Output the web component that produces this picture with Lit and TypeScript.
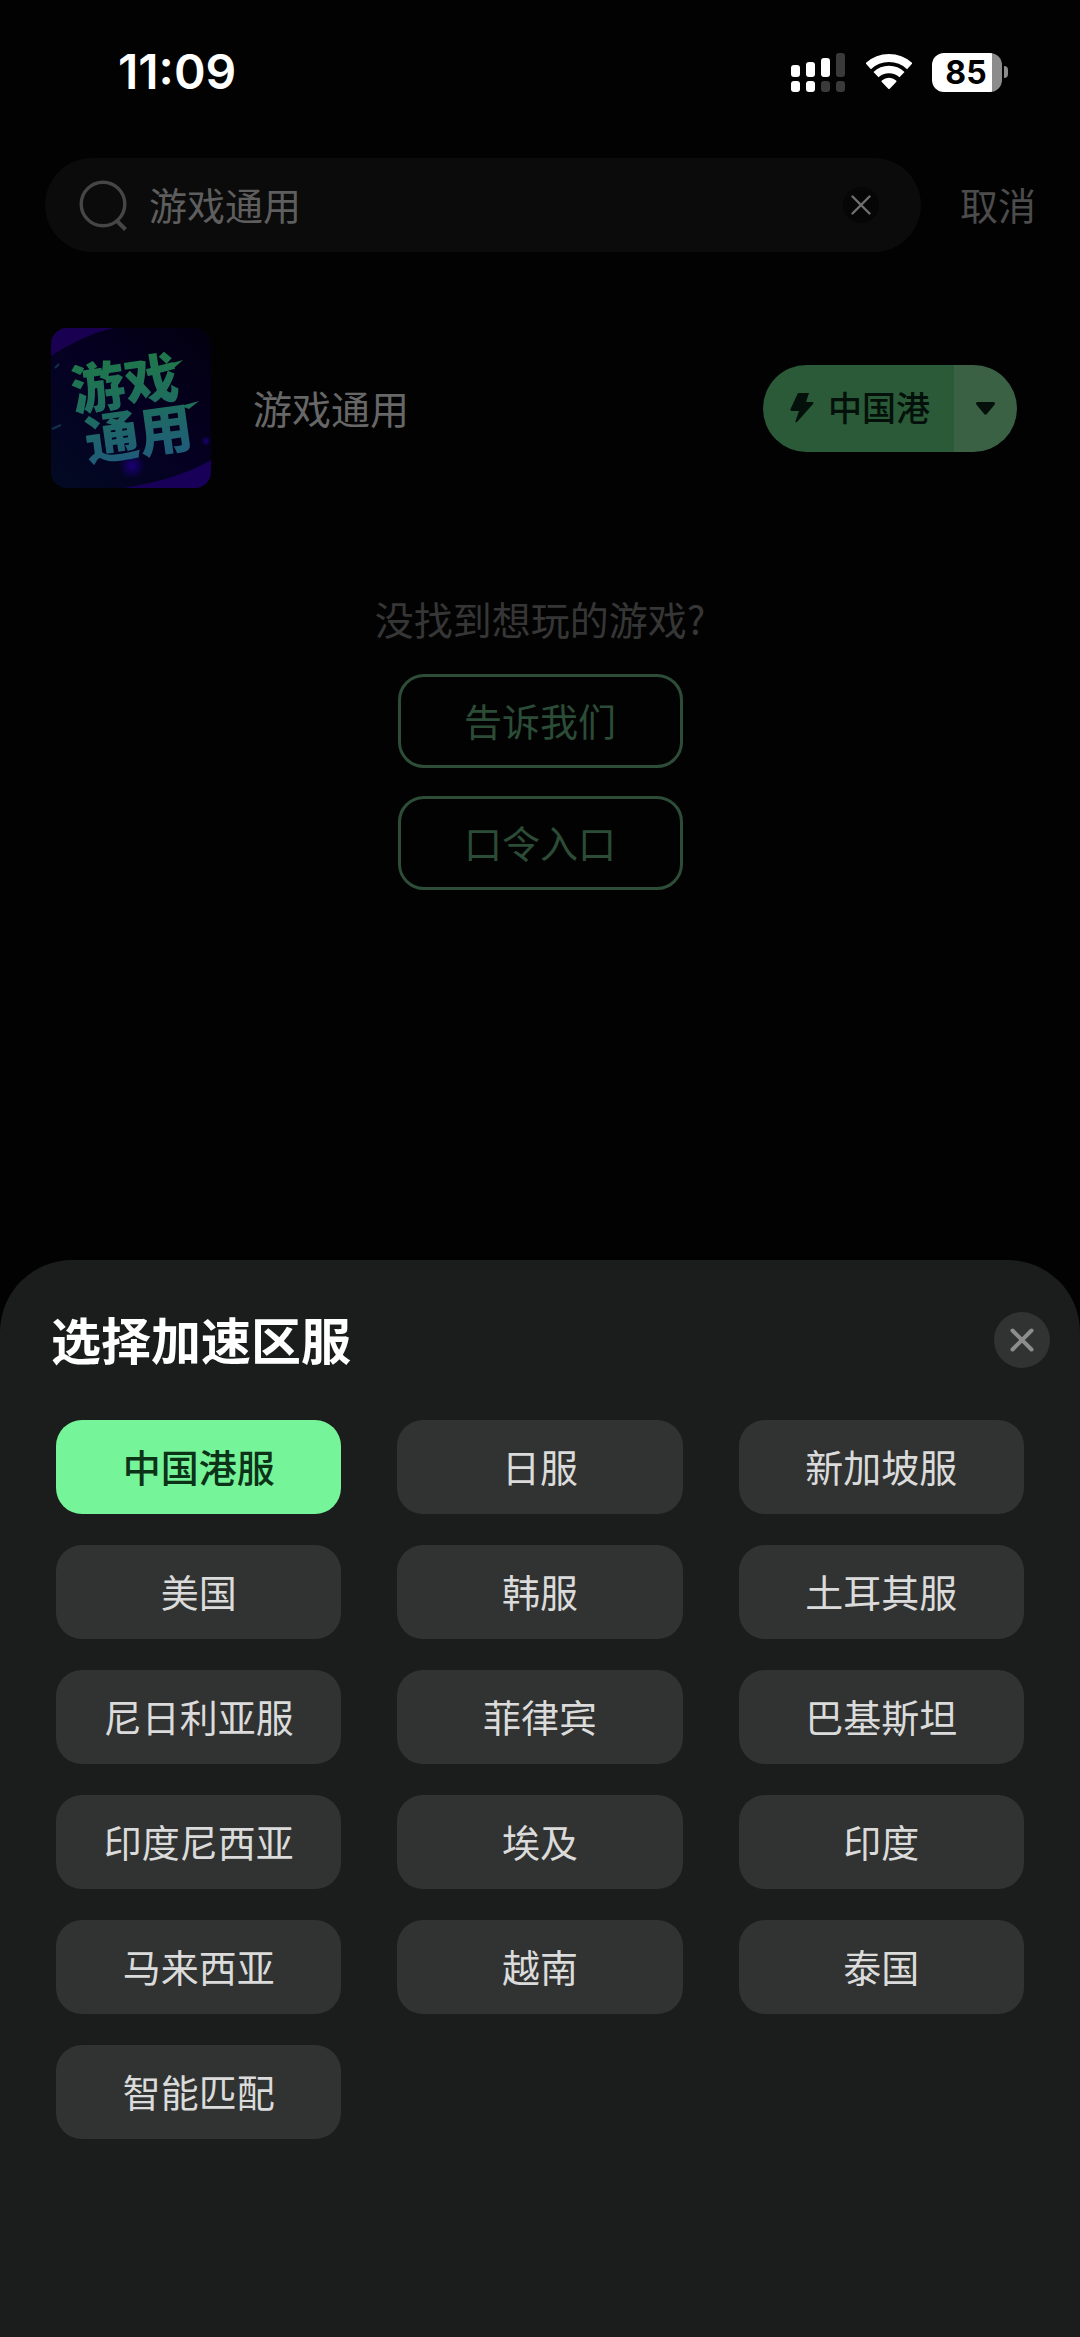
import { LitElement, html, css, svg } from "lit";
import { customElement, property, state } from "lit/decorators.js";
import { classMap } from "lit/directives/class-map.js";

const FONT = css`"Inter", "Noto Sans CJK SC", sans-serif`;
const CJK = css`"Noto Sans CJK SC", "Inter", sans-serif`;

@customElement("status-bar")
class StatusBar extends LitElement {
  @property() time = "";
  @property({ type: Number }) battery = 0;

  static styles = css`
    :host {
      display: flex;
      align-items: center;
      justify-content: space-between;
      height: 144px;
      padding: 0 72px 0 118px;
      font-family: ${FONT};
      color: #fff;
    }
    .time {
      font-size: 48px;
      font-weight: 600;
      line-height: 56px;
    }
    .icons {
      display: flex;
      align-items: center;
      gap: 20px;
    }
    svg {
      display: block;
    }
    .battery {
      display: flex;
      align-items: center;
      gap: 2px;
    }
    .cell {
      box-sizing: border-box;
      display: grid;
      place-items: center;
      width: 70px;
      height: 39px;
      padding-right: 2px;
      border-radius: 12px;
      background: linear-gradient(90deg, #fff 60px, #8c8c8c 60px);
      color: #000;
      font-size: 32px;
      font-weight: 700;
      line-height: 39px;
    }
    .nub {
      width: 4px;
      height: 12px;
      border-radius: 0 4px 4px 0;
      background: #8c8c8c;
    }
  `;

  render() {
    const bars = [12, 9, 5, 0];
    return html`
      <span class="time">${this.time}</span>
      <div class="icons">
        <svg width="55" height="39" viewBox="0 0 55 39" aria-hidden="true">
          ${bars.map(
            (top, i) => svg`
              <rect x=${i * 15} y=${top} width="9" height=${24 - top} rx="3" fill=${i < 3 ? "#fff" : "#3a3a3a"} />
              <rect x=${i * 15} y="28" width="9" height="11" rx="3" fill=${i < 2 ? "#fff" : "#3a3a3a"} />`
          )}
        </svg>
        <svg width="46" height="36" viewBox="0 0 46 36" aria-hidden="true">
          <path d="M2.2 12.2A30.5 30.5 0 0 1 43.8 12.2" fill="none" stroke="#fff" stroke-width="8" />
          <path d="M10 20.6A19 19 0 0 1 36 20.6" fill="none" stroke="#fff" stroke-width="7.4" />
          <path d="M23 34L16.5 27.2A10 10 0 0 1 29.5 27.2Z" fill="#fff" stroke="#fff" stroke-width="2" stroke-linejoin="round" />
        </svg>
        <div class="battery">
          <span class="cell">${this.battery}</span>
          <span class="nub"></span>
        </div>
      </div>
    `;
  }
}

@customElement("search-bar")
class SearchBar extends LitElement {
  @property() value = "";

  static styles = css`
    :host {
      display: flex;
      align-items: center;
      gap: 39px;
      margin-top: 14px;
      padding: 0 44px 0 45px;
      font-family: ${CJK};
    }
    .box {
      flex: 1;
      display: flex;
      align-items: center;
      height: 94px;
      padding: 0 42px 0 34px;
      border-radius: 47px;
      background: #0b0b0b;
    }
    svg {
      display: block;
      flex: none;
    }
    input {
      flex: 1;
      min-width: 0;
      height: 56px;
      margin: 0 0 0 20px;
      padding: 0 0 2px;
      border: 0;
      outline: 0;
      background: none;
      color: #5e5e5e;
      font: 400 38px/56px ${CJK};
    }
    button {
      padding: 0 0 2px;
      border: 0;
      background: none;
      color: #4c4c4c;
      font: 400 38px/56px ${CJK};
    }
    .clear {
      display: grid;
      place-items: center;
      width: 36px;
      height: 36px;
      padding: 0;
      border-radius: 50%;
      background: #060606;
    }
  `;

  private clear() {
    this.value = "";
  }

  render() {
    return html`
      <div class="box">
        <svg width="50" height="52" viewBox="0 0 50 52" fill="none" stroke="#464646" stroke-width="3.4" aria-hidden="true">
          <circle cx="24" cy="25" r="21.8" />
          <path d="M38 42L46.5 50.5" stroke-width="4" />
        </svg>
        <input type="text" aria-label="搜索游戏" .value=${this.value} />
        <button class="clear" aria-label="清除" @click=${this.clear}>
          <svg width="20" height="20" viewBox="0 0 20 20" stroke="#707070" stroke-width="2.4" stroke-linecap="round">
            <path d="M1.5 1.5L18.5 18.5M18.5 1.5L1.5 18.5" />
          </svg>
        </button>
      </div>
      <button>取消</button>
    `;
  }
}

@customElement("game-row")
class GameRow extends LitElement {
  @property() name = "";
  @property() region = "";

  static styles = css`
    :host {
      display: flex;
      align-items: center;
      margin-top: 76px;
      padding: 0 63px 0 51px;
      font-family: ${CJK};
    }
    svg {
      display: block;
      flex: none;
    }
    .art {
      border-radius: 16px;
    }
    .art text {
      font: 900 54px ${CJK};
    }
    .name {
      flex: 1;
      margin: 0 0 0 42px;
      padding-bottom: 2px;
      color: #676767;
      font-size: 39px;
      font-weight: 400;
      line-height: 60px;
    }
    .split {
      display: flex;
      height: 87px;
      border-radius: 44px;
      overflow: hidden;
    }
    button {
      display: flex;
      align-items: center;
      border: 0;
      color: #04100a;
      font: 500 34px/52px ${CJK};
    }
    .go {
      gap: 14px;
      padding: 0 24px 0 27px;
      background: #2a5a38;
    }
    .label {
      padding-bottom: 2px;
    }
    .more {
      padding: 0 22px;
      background: #3a6143;
    }
  `;

  render() {
    return html`
      <svg class="art" width="160" height="160" viewBox="0 0 160 160" role="img" aria-label=${this.name}>
        <defs>
          <linearGradient id="ink" x1="0" y1="0" x2="0" y2="160" gradientUnits="userSpaceOnUse">
            <stop offset="0.15" stop-color="#207a45" />
            <stop offset="0.5" stop-color="#1e6e5c" />
            <stop offset="0.9" stop-color="#1f5a7c" />
          </linearGradient>
          <linearGradient id="night" x1="1" y1="0" x2="0" y2="1">
            <stop offset="0" stop-color="#03000f" />
            <stop offset="0.5" stop-color="#050022" />
            <stop offset="1" stop-color="#020a22" />
          </linearGradient>
          <radialGradient id="glow">
            <stop offset="0" stop-color="#1b0078" />
            <stop offset="1" stop-color="#1b0078" stop-opacity="0" />
          </radialGradient>
        </defs>
        <rect width="160" height="160" fill="url(#night)" />
        <path d="M0 0H62Q30 8 0 28Z" fill="#190051" />
        <path d="M160 132V160H72Q126 152 160 132Z" fill="#180058" />
        <circle cx="81" cy="138" r="13" fill="url(#glow)" />
        <circle cx="155" cy="113" r="5" fill="url(#glow)" />
        <path d="M1 101L10 97M4 40L8 36" stroke="#14304c" stroke-width="2" />
        <g fill="url(#ink)">
          <text x="23" y="83" transform="rotate(-8 23 83)">游戏</text>
          <text x="37" y="133" transform="rotate(-8 37 133)">通用</text>
        </g>
        <path d="M114 37L132 32L124 39Z M130 78L148 73L138 81Z" fill="url(#ink)" />
      </svg>
      <h2 class="name">${this.name}</h2>
      <div class="split">
        <button class="go">
          <svg width="24" height="30" viewBox="0 0 24 30" fill="currentColor" aria-hidden="true">
            <path d="M8 0H19L16 9H23Q24 10 23 11L7 29Q5 30 5.500 28L9 18H1.500Q0 18 .5 16Z" />
          </svg>
          <span class="label">${this.region}</span>
        </button>
        <button class="more" aria-label="选择区服">
          <svg width="19" height="13" viewBox="0 0 19 13" fill="currentColor">
            <path d="M1.500 0H17.500Q20 .5 18.300 3L11 11.800Q9.500 13.500 8 11.800L.7 3Q-1 .5 1.500 0Z" />
          </svg>
        </button>
      </div>
    `;
  }
}

@customElement("region-sheet")
class RegionSheet extends LitElement {
  @property({ attribute: false }) regions: string[] = [];
  @state() private selected = 0;

  static styles = css`
    :host {
      display: block;
      padding: 48px 0 198px;
      border-radius: 72px 72px 0 0;
      background: #1b1d1c;
      font-family: ${CJK};
    }
    header {
      display: flex;
      align-items: center;
      justify-content: space-between;
      height: 64px;
      padding: 0 30px 0 51px;
    }
    h1 {
      margin: 0;
      padding-bottom: 4px;
      color: #fff;
      font-size: 50px;
      font-weight: 700;
      line-height: 60px;
    }
    button {
      padding: 0;
      border: 0;
      background: #313332;
    }
    .close {
      display: grid;
      place-items: center;
      width: 56px;
      height: 56px;
      border-radius: 50%;
    }
    .grid {
      display: grid;
      grid-template-columns: repeat(3, 1fr);
      gap: 31px 56px;
      padding: 48px 56px 0;
    }
    .chip {
      height: 94px;
      padding-bottom: 2px;
      border-radius: 26px;
      color: #dadbda;
      font: 400 38px/56px ${CJK};
    }
    .chip.on {
      background: #76f499;
      color: #0c3317;
      font-weight: 500;
    }
  `;

  render() {
    return html`
      <header>
        <h1>选择加速区服</h1>
        <button class="close" aria-label="关闭">
          <svg width="24" height="24" viewBox="0 0 24 24" stroke="#8c8d8c" stroke-width="4" stroke-linecap="round">
            <path d="M2.500 2.500L21.500 21.500M21.500 2.500L2.500 21.500" />
          </svg>
        </button>
      </header>
      <div class="grid">
        ${this.regions.map(
          (name, i) => html`<button
            class=${classMap({ chip: true, on: i === this.selected })}
            aria-pressed=${i === this.selected}
            @click=${() => (this.selected = i)}
          >${name}</button>`
        )}
      </div>
    `;
  }
}

@customElement("app-root")
class AppRoot extends LitElement {
  private regions = [
    "中国港服", "日服", "新加坡服",
    "美国", "韩服", "土耳其服",
    "尼日利亚服", "菲律宾", "巴基斯坦",
    "印度尼西亚", "埃及", "印度",
    "马来西亚", "越南", "泰国",
    "智能匹配",
  ];

  static styles = css`
    :host {
      display: flex;
      flex-direction: column;
      min-height: 100vh;
      background: #020202;
      font-family: ${CJK};
    }
    .page {
      flex: 1;
    }
    .help {
      display: flex;
      flex-direction: column;
      align-items: center;
      gap: 28px;
      margin-top: 102px;
    }
    p {
      margin: 0;
      color: #363636;
      font-size: 39px;
      line-height: 56px;
    }
    .help button {
      width: 285px;
      height: 94px;
      padding: 0 0 2px;
      border: 3px solid #2d4d38;
      border-radius: 26px;
      background: none;
      color: #2b4c36;
      font: 400 38px/56px ${CJK};
    }
  `;

  render() {
    return html`
      <div class="page">
        <status-bar time="11:09" battery="85"></status-bar>
        <search-bar value="游戏通用"></search-bar>
        <game-row name="游戏通用" region="中国港"></game-row>
        <section class="help">
          <p>没找到想玩的游戏?</p>
          <button>告诉我们</button>
          <button>口令入口</button>
        </section>
      </div>
      <region-sheet .regions=${this.regions}></region-sheet>
    `;
  }
}
